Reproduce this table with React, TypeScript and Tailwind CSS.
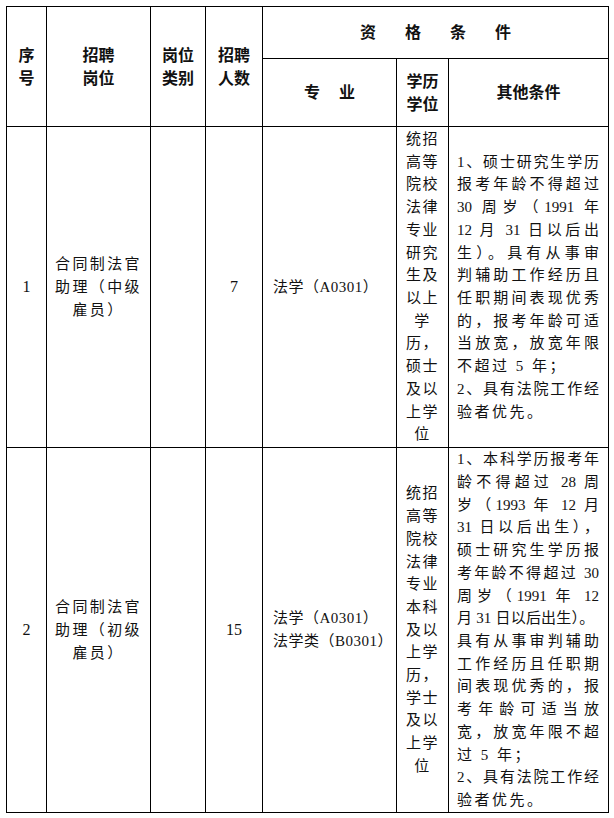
import React from "react";

type Line = { text: string; fill?: boolean; tight?: boolean };

const row1Edu = ["统招", "高等", "院校", "法律", "专业", "研究", "生及", "以上", "学", "历，", "硕士", "及以", "上学", "位"];
const row2Edu = ["统招", "高等", "院校", "法律", "专业", "本科", "及以", "上学", "历，", "学士", "及以", "上学", "位"];

const row1Other: Line[] = [
  { text: "1、硕士研究生学历", fill: true },
  { text: "报考年龄不得超过", fill: true },
  { text: "30 周岁（1991 年", fill: true },
  { text: "12 月 31 日以后出", fill: true },
  { text: "生）。具有从事审", fill: true },
  { text: "判辅助工作经历且", fill: true },
  { text: "任职期间表现优秀", fill: true },
  { text: "的，报考年龄可适", fill: true },
  { text: "当放宽，放宽年限", fill: true },
  { text: "不超过 5 年；" },
  { text: "2、具有法院工作经", fill: true },
  { text: "验者优先。" },
];

const row2Other: Line[] = [
  { text: "1、本科学历报考年", fill: true },
  { text: "龄不得超过 28 周", fill: true },
  { text: "岁（1993 年 12 月", fill: true },
  { text: "31 日以后出生），", fill: true },
  { text: "硕士研究生学历报", fill: true },
  { text: "考年龄不得超过 30", fill: true },
  { text: "周岁（1991 年 12", fill: true },
  { text: "月 31 日以后出生）。", tight: true },
  { text: "具有从事审判辅助", fill: true },
  { text: "工作经历且任职期", fill: true },
  { text: "间表现优秀的，报", fill: true },
  { text: "考年龄可适当放", fill: true },
  { text: "宽，放宽年限不超", fill: true },
  { text: "过 5 年；" },
  { text: "2、具有法院工作经", fill: true },
  { text: "验者优先。" },
];

const cell = "border border-black align-middle p-0";
const head = "border border-black align-middle p-0 text-center font-bold text-[16px] leading-[23px]";

function EduCell({ lines }: { lines: string[] }) {
  return (
    <td className={cell}>
      <div className="flex flex-col items-center text-[15px] leading-[22.7px] tracking-[1.5px]">
        {lines.map((l, i) => (
          <div key={i} className="whitespace-nowrap">{l}</div>
        ))}
      </div>
    </td>
  );
}

function lineClass(l: Line) {
  if (l.fill) return "text-justify [text-align-last:justify] whitespace-nowrap";
  if (l.tight) return "text-left whitespace-nowrap tracking-[0.2px]";
  return "text-left whitespace-nowrap tracking-[2.5px]";
}

function OtherCell({ lines }: { lines: Line[] }) {
  return (
    <td className={cell}>
      <div className="pl-[8px] pr-[9px] text-[15px] leading-[22.7px]">
        {lines.map((l, i) => (
          <div key={i} className={lineClass(l)}>
            {l.text}
          </div>
        ))}
      </div>
    </td>
  );
}

function Post({ lines }: { lines: string[] }) {
  return (
    <td className={cell}>
      <div className="flex flex-col items-center text-[15px] leading-[23px] tracking-[2.4px]">
        {lines.map((l, i) => (
          <div key={i} className="whitespace-nowrap">{l}</div>
        ))}
      </div>
    </td>
  );
}

export default function App() {
  return (
    <div
      className="w-[614px] h-[818px] bg-white text-[#111] pt-[6px] pl-[6px]"
      style={{ fontFamily: '"Liberation Serif", "Noto Sans CJK SC", serif' }}
    >
      <table className="table-fixed border-collapse w-[602px]">
        <colgroup>
          <col className="w-[40px]" />
          <col className="w-[104px]" />
          <col className="w-[55px]" />
          <col className="w-[57px]" />
          <col className="w-[134px]" />
          <col className="w-[52px]" />
          <col className="w-[160px]" />
        </colgroup>
        <thead>
          <tr className="h-[52px]">
            <th rowSpan={2} className={head}>序<br />号</th>
            <th rowSpan={2} className={head}>招聘<br />岗位</th>
            <th rowSpan={2} className={head}>岗位<br />类别</th>
            <th rowSpan={2} className={head}>招聘<br />人数</th>
            <th colSpan={3} className={head}>
              <div className="flex justify-center gap-[29px]">
                <span>资</span>
                <span>格</span>
                <span>条</span>
                <span>件</span>
              </div>
            </th>
          </tr>
          <tr className="h-[68px]">
            <th className={head}>
              <div className="flex justify-center gap-[19px]">
                <span>专</span>
                <span>业</span>
              </div>
            </th>
            <th className={head}>学历<br />学位</th>
            <th className={head}>其他条件</th>
          </tr>
        </thead>
        <tbody>
          <tr className="h-[321px]">
            <td className={`${cell} text-center text-[16px]`}>1</td>
            <Post lines={["合同制法官", "助理（中级", "雇员）"]} />
            <td className={cell}></td>
            <td className={`${cell} text-center text-[16px]`}>7</td>
            <td className={`${cell} pl-[10px] text-[15px] leading-[22.7px] tracking-[0.5px]`}>法学（A0301）</td>
            <EduCell lines={row1Edu} />
            <OtherCell lines={row1Other} />
          </tr>
          <tr className="h-[365px]">
            <td className={`${cell} text-center text-[16px]`}>2</td>
            <Post lines={["合同制法官", "助理（初级", "雇员）"]} />
            <td className={cell}></td>
            <td className={`${cell} text-center text-[16px]`}>15</td>
            <td className={`${cell} pl-[10px] text-[15px] leading-[22.7px] tracking-[0.5px]`}>
              法学（A0301）
              <br />
              法学类（B0301）
            </td>
            <EduCell lines={row2Edu} />
            <OtherCell lines={row2Other} />
          </tr>
        </tbody>
      </table>
    </div>
  );
}
